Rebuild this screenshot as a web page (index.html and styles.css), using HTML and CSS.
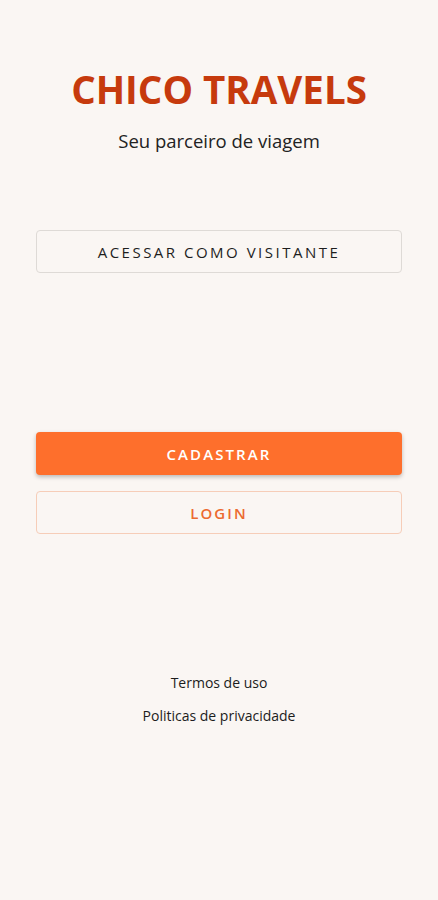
FILE: index.html
```html
<!DOCTYPE html>
<html lang="pt">
<head>
    <meta charset="UTF-8">
    <meta name="viewport" content="width=device-width, initial-scale=1.0">
    <title>Chico Travels</title>
    <link rel="stylesheet" href="styles.css">
</head>
<body>
    <div class="screen">
        <header class="brand">
            <h1>CHICO TRAVELS</h1>
            <p>Seu parceiro de viagem</p>
        </header>
        <button class="btn btn-visitor">ACESSAR COMO VISITANTE</button>
        <div class="actions">
            <button class="btn btn-primary">CADASTRAR</button>
            <button class="btn btn-outline">LOGIN</button>
        </div>
        <footer class="links">
            <a href="#">Termos de uso</a>
            <a href="#">Politicas de privacidade</a>
        </footer>
    </div>
</body>
</html>
```

FILE: styles.css
```css
body {
    margin: 0;
    background-color: #faf6f3;
    font-family: "Open Sans", "Noto Sans", sans-serif;
}
.screen {
    width: 438px;
    height: 900px;
    padding: 0 36px;
    box-sizing: border-box;
    display: flex;
    flex-direction: column;
}
.brand {
    text-align: center;
    padding-top: 64px;
}
.brand h1 {
    margin: 0;
    font-size: 38.5px;
    font-weight: 700;
    color: #c63a0d;
    line-height: 50px;
}
.brand p {
    margin: 14px 0 0;
    font-size: 18.5px;
    color: #222;
}
.btn {
    width: 100%;
    height: 43px;
    border-radius: 4px;
    font-family: inherit;
    font-size: 15px;
    letter-spacing: 2.1px;
    cursor: pointer;
}
.btn-visitor {
    margin-top: 77px;
    background: transparent;
    border: 1px solid #dedad6;
    color: #1e1e1e;
    letter-spacing: 2.5px;
}
.actions {
    margin-top: 159px;
    display: flex;
    flex-direction: column;
    gap: 16px;
}
.btn-primary {
    background-color: #fe6f2c;
    color: #fff;
    border: none;
    font-weight: 600;
    box-shadow: 0 2px 4px rgba(0, 0, 0, 0.25);
}
.btn-outline {
    background: transparent;
    border: 1px solid #f6cdb8;
    color: #ec6a30;
    font-weight: 600;
}
.links {
    margin-top: 139px;
    display: flex;
    flex-direction: column;
    align-items: center;
    gap: 13px;
}
.links a {
    font-size: 14px;
    color: #1c1c1c;
    text-decoration: none;
    line-height: 20px;
}
```
